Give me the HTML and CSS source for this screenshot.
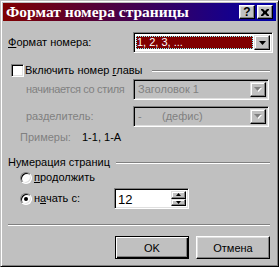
FILE: index.html
```html
<!DOCTYPE html>
<html lang="ru">
<head>
    <meta charset="UTF-8">
    <meta name="viewport" content="width=device-width, initial-scale=1.0">
    <title>Формат номера страницы</title>
    <link rel="stylesheet" href="styles.css">
</head>
<body>
    <div class="dialog">
        <div class="titlebar">
            <span class="title">Формат номера страницы</span>
            <div class="caption-btns">
                <span class="cbtn help">?</span>
                <span class="cbtn">
                    <svg width="8" height="7" viewBox="0 0 8 7"><path d="M0 0h2l2 2 2-2h2v1l-2 2v1l2 2v1h-2l-2-2-2 2h-2v-1l2-2v-1l-2-2z" fill="#000"/></svg>
                </span>
            </div>
        </div>

        <div class="content">
            <div class="row row-format">
                <span class="label"><u>Ф</u>ормат номера:</span>
                <div class="combo wide">
                    <div class="combo-field selected"><span>1, 2, 3, ...</span></div>
                    <span class="combo-btn"><svg width="7" height="4" viewBox="0 0 7 4"><path d="M0 0h7l-3.5 4z" fill="#000"/></svg></span>
                </div>
            </div>

            <div class="group-head check-head">
                <span class="checkbox"></span>
                <span>Включить номер <u>г</u>лавы</span>
                <span class="etch"></span>
            </div>

            <div class="row indent dim">
                <span class="label tight">начинается со стиля</span>
                <div class="combo off">
                    <div class="combo-field">Заголовок 1</div>
                    <span class="combo-btn"><svg width="8" height="5" viewBox="0 0 8 5"><path d="M1 1h7l-3.5 4z" fill="#fff"/><path d="M0 0h7l-3.5 4z" fill="#808080"/></svg></span>
                </div>
            </div>

            <div class="row row-sep indent dim">
                <span class="label">разделитель:</span>
                <div class="combo off">
                    <div class="combo-field"><span class="dash">-</span>(дефис)</div>
                    <span class="combo-btn"><svg width="8" height="5" viewBox="0 0 8 5"><path d="M1 1h7l-3.5 4z" fill="#fff"/><path d="M0 0h7l-3.5 4z" fill="#808080"/></svg></span>
                </div>
            </div>

            <div class="examples">
                <span class="dim ex-label">Примеры:</span>
                <span>1-1, 1-A</span>
            </div>

            <div class="group-head num-head">
                <span>Нумерация страниц</span>
                <span class="etch"></span>
            </div>

            <div class="radio-row">
                <span class="radio"></span>
                <span><u>п</u>родолжить</span>
            </div>

            <div class="radio-row start-row">
                <span class="radio checked"></span>
                <span class="radio-label">н<u>а</u>чать с:</span>
                <div class="spin">
                    <span class="spin-val">12</span>
                    <div class="spin-btns">
                        <span class="spin-btn"><svg width="5" height="3" viewBox="0 0 5 3"><path d="M2.5 0l2.5 3h-5z" fill="#000"/></svg></span>
                        <span class="spin-btn"><svg width="5" height="3" viewBox="0 0 5 3"><path d="M0 0h5l-2.5 3z" fill="#000"/></svg></span>
                    </div>
                </div>
            </div>

            <div class="sep"></div>

            <div class="buttons">
                <button class="btn default">OK</button>
                <button class="btn">Отмена</button>
            </div>
        </div>
    </div>
</body>
</html>
```

FILE: styles.css
```css
body {
    margin: 0;
    padding: 0;
    background-color: #c0c0c0;
}
.dialog {
    width: 279px;
    height: 267px;
    box-sizing: border-box;
    background-color: #c0c0c0;
    border: 1px solid;
    border-color: #c0c0c0 #000 #000 #c0c0c0;
    box-shadow: inset 1px 1px #fff, inset -1px -1px #808080;
    padding: 2px;
    font-family: "Liberation Sans", Arial, sans-serif;
    font-size: 11px;
    line-height: 13px;
    color: #000;
    display: flex;
    flex-direction: column;
}
.titlebar {
    height: 18px;
    flex: none;
    display: flex;
    align-items: center;
    padding: 0 3px 0 3px;
    background: linear-gradient(to right, #800000, #0000a8);
    color: #fff;
}
.title {
    flex: 1;
    font-family: "Liberation Serif", "Times New Roman", serif;
    font-weight: bold;
    font-size: 15.5px;
    line-height: 18px;
    white-space: nowrap;
}
.caption-btns {
    display: flex;
    gap: 2px;
}
.cbtn {
    width: 16px;
    height: 14px;
    box-sizing: border-box;
    background-color: #c0c0c0;
    border: 1px solid;
    border-color: #fff #000 #000 #fff;
    box-shadow: inset -1px -1px #808080, inset 1px 1px #dfdfdf;
    display: flex;
    align-items: center;
    justify-content: center;
    color: #000;
}
.help {
    font-family: "Liberation Sans", Arial, sans-serif;
    font-weight: bold;
    font-size: 12px;
    line-height: 12px;
}
.content {
    padding: 0 4px;
    display: flex;
    flex-direction: column;
}
u {
    text-decoration-thickness: 1px;
    text-underline-offset: 1px;
}
.row {
    display: flex;
    align-items: center;
    height: 21px;
}
.row-format {
    margin-top: 11px;
}
.label {
    flex: none;
    width: 125px;
    padding-left: 1px;
    white-space: nowrap;
}
.indent .label {
    width: 107px;
    padding-left: 19px;
}
.label.tight {
    letter-spacing: -0.35px;
}
.dim {
    color: #808080;
}
.indent {
    margin-top: 2px;
}
.row-sep {
    margin-top: 6px;
}
.combo {
    flex: none;
    width: 136px;
    height: 21px;
    box-sizing: border-box;
    border: 1px solid;
    border-color: #808080 #fff #fff #808080;
    box-shadow: inset 1px 1px #000, inset -1px -1px #dfdfdf;
    padding: 2px;
    background-color: #fff;
    display: flex;
}
.combo.wide {
    width: 140px;
}
.combo-field {
    flex: 1;
    display: flex;
    align-items: center;
    padding-left: 2px;
    white-space: nowrap;
}
.combo-field.selected {
    padding: 1px 1px 1px 0;
}
.combo-field.selected span {
    flex: 1;
    align-self: stretch;
    display: flex;
    align-items: center;
    padding-left: 1px;
    background-color: #800000;
    color: #fff;
    outline: 1px dotted #80ffff;
    outline-offset: -1px;
}
.combo.off {
    background-color: #c0c0c0;
}
.dash {
    width: 24px;
}
.combo-btn {
    width: 16px;
    box-sizing: border-box;
    background-color: #c0c0c0;
    border: 1px solid;
    border-color: #dfdfdf #000 #000 #dfdfdf;
    box-shadow: inset -1px -1px #808080, inset 1px 1px #fff;
    display: flex;
    align-items: center;
    justify-content: center;
}
.group-head {
    display: flex;
    align-items: center;
    height: 13px;
}
.check-head {
    margin-top: 11px;
    padding-left: 4px;
}
.checkbox {
    width: 13px;
    height: 13px;
    box-sizing: border-box;
    margin-right: 1px;
    background-color: #fff;
    border: 1px solid;
    border-color: #808080 #fff #fff #808080;
    box-shadow: inset 1px 1px #000, inset -1px -1px #dfdfdf;
}
.etch {
    flex: 1;
    height: 0;
    border-top: 1px solid #808080;
    border-bottom: 1px solid #fff;
    margin: 0 2px 0 8px;
}
.check-head .etch {
    margin-left: 9px;
}
.num-head {
    margin-top: 12px;
    padding-left: 1px;
}
.num-head .etch {
    margin-left: 6px;
}
.examples {
    display: flex;
    height: 13px;
    margin-top: 4px;
    padding-left: 13px;
}
.ex-label {
    width: 62px;
}
.radio-row {
    display: flex;
    align-items: center;
    height: 13px;
    margin-top: 2px;
    padding-left: 13px;
}
.radio {
    width: 12px;
    height: 12px;
    box-sizing: border-box;
    margin-right: 2px;
    border-radius: 50%;
    background-color: #fff;
    border: 1px solid;
    border-color: #808080 #fff #fff #808080;
    box-shadow: inset 1px 1px #000, inset -1px -1px #dfdfdf;
    display: flex;
    align-items: center;
    justify-content: center;
}
.radio.checked::after {
    content: "";
    width: 4px;
    height: 4px;
    border-radius: 50%;
    background-color: #000;
}
.start-row {
    height: 21px;
    margin-top: 4px;
}
.radio-label {
    width: 80px;
}
.spin {
    width: 75px;
    height: 21px;
    box-sizing: border-box;
    border: 1px solid;
    border-color: #808080 #fff #fff #808080;
    box-shadow: inset 1px 1px #000, inset -1px -1px #dfdfdf;
    padding: 2px;
    background-color: #fff;
    display: flex;
}
.spin-val {
    flex: 1;
    padding-left: 1px;
    font-size: 13px;
    line-height: 17px;
}
.spin-btns {
    width: 15px;
    display: flex;
    flex-direction: column;
}
.spin-btn {
    flex: 1;
    box-sizing: border-box;
    background-color: #c0c0c0;
    border: 1px solid;
    border-color: #dfdfdf #000 #000 #dfdfdf;
    box-shadow: inset -1px -1px #808080, inset 1px 1px #fff;
    display: flex;
    align-items: center;
    justify-content: center;
}
.sep {
    height: 0;
    margin: 15px 2px 0 1px;
    border-top: 1px solid #808080;
    border-bottom: 1px solid #fff;
}
.buttons {
    display: flex;
    justify-content: flex-end;
    gap: 7px;
    margin-top: 10px;
    padding-right: 2px;
}
.btn {
    width: 74px;
    height: 23px;
    box-sizing: border-box;
    padding: 0;
    background-color: #c0c0c0;
    border: 1px solid;
    border-color: #fff #000 #000 #fff;
    box-shadow: inset -1px -1px #808080, inset 1px 1px #dfdfdf;
    font-family: "Liberation Sans", Arial, sans-serif;
    font-size: 11px;
    color: #000;
}
.btn.default {
    border-color: #000;
    box-shadow: inset 1px 1px #fff, inset -1px -1px #000, inset -2px -2px #808080;
}
```
